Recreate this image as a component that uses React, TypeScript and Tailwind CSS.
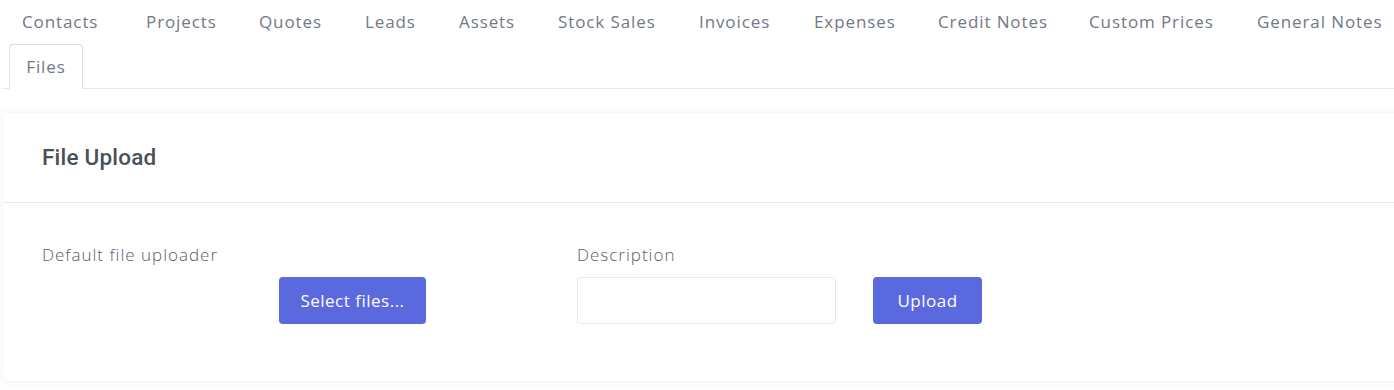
import React from "react";

type Tab = { label: string; width: string };

const tabs: Tab[] = [
  { label: "Contacts", width: "w-[124px]" },
  { label: "Projects", width: "w-[113px]" },
  { label: "Quotes", width: "w-[106px]" },
  { label: "Leads", width: "w-[94px]" },
  { label: "Assets", width: "w-[99px]" },
  { label: "Stock Sales", width: "w-[141px]" },
  { label: "Invoices", width: "w-[115px]" },
  { label: "Expenses", width: "w-[124px]" },
  { label: "Credit Notes", width: "w-[151px]" },
  { label: "Custom Prices", width: "w-[168px]" },
  { label: "General Notes", width: "w-[142px]" },
];

const App = () => {
  return (
    <div className="min-h-[390px] w-[1394px] overflow-hidden bg-white font-['Open_Sans',sans-serif]">
      {/* tab strip */}
      <nav className="ml-[3px] flex flex-wrap border-b border-[#e5e7ea]">
        {tabs.map((tab) => (
          <a
            key={tab.label}
            className={`${tab.width} flex h-[44px] shrink-0 items-center pl-[19px] text-[17px] tracking-[0.9px] whitespace-nowrap text-[#727887]`}
          >
            {tab.label}
          </a>
        ))}
        <a className="relative -mb-px ml-[6px] flex h-[45px] w-[74px] items-center justify-center rounded-t-[4px] border border-b-white border-[#dcdfe3] bg-white text-[17px] tracking-[0.9px] text-[#727887]">
          Files
        </a>
      </nav>

      {/* upload card */}
      <section className="ml-[3px] mt-[24px] w-[1400px] bg-white shadow-[0_0_8px_rgba(120,110,230,0.12)]">
        <header className="flex h-[90px] items-center border-b border-[#eaebef] px-[39px]">
          <h4 className="font-['Roboto',sans-serif] text-[22.5px] font-medium tracking-[0.2px] text-[#4b5057]">
            File Upload
          </h4>
        </header>

        <div className="flex px-[39px] pt-[40px] pb-[57px]">
          <div className="flex w-[535px] flex-col">
            <label className="text-[17px] leading-[24px] font-light tracking-[1px] text-[#585d69]">
              Default file uploader
            </label>
            <button
              type="button"
              className="mt-[10px] ml-[237px] h-[47px] w-[147px] rounded-[4px] bg-[#5b69df] text-[17px] tracking-[0.5px] text-white"
            >
              Select files...
            </button>
          </div>

          <div className="flex flex-col">
            <label className="text-[17px] leading-[24px] font-light tracking-[1px] text-[#585d69]">Description</label>
            <div className="mt-[10px] flex gap-[37px]">
              <input
                type="text"
                className="h-[47px] w-[259px] rounded-[4px] border border-[#e6e8ee] px-3 outline-none"
              />
              <button
                type="button"
                className="h-[47px] w-[109px] rounded-[4px] bg-[#5b69df] text-[17px] tracking-[0.5px] text-white"
              >
                Upload
              </button>
            </div>
          </div>
        </div>
      </section>
    </div>
  );
};

export default App;
